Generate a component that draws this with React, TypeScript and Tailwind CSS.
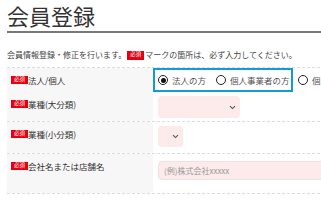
import React from 'react';

const FONT = { fontFamily: '"Noto Sans CJK JP", "Noto Sans", sans-serif' };

function Badge({ className = '' }: { className?: string }) {
  return (
    <span
      className={`inline-flex h-[8px] w-[17px] items-center justify-center bg-[#e60012] text-[5.5px] leading-none text-white ${className}`}
    >
      必須
    </span>
  );
}

function Radio({ checked, label }: { checked?: boolean; label: string }) {
  return (
    <span className="flex items-center gap-[4px]">
      <span className="flex h-[10px] w-[10px] items-center justify-center rounded-full border border-[#222] bg-white">
        {checked && <span className="h-[5px] w-[5px] rounded-full bg-[#111]" />}
      </span>
      <span className="text-[8.5px] leading-none text-[#555]">{label}</span>
    </span>
  );
}

function Chevron() {
  return (
    <svg width="7" height="5" viewBox="0 0 7 5" className="text-[#555]">
      <path d="M1 1.2 L3.5 3.6 L6 1.2" fill="none" stroke="currentColor" strokeWidth="1.1" />
    </svg>
  );
}

function Label({ text }: { text: string }) {
  return (
    <div className="flex w-[146px] shrink-0 items-start bg-[#f7f7f7] pl-[4px] pt-[6px]">
      <span className="flex items-center text-[8.5px] leading-[12px] text-[#333]">
        <Badge />
        {text}
      </span>
    </div>
  );
}

export default function App() {
  return (
    <div className="h-[200px] w-[321px] overflow-hidden bg-white" style={FONT}>
      <div className="w-[420px] pl-[7px]">
        <h1 className="pt-[2px] text-[22px] leading-[26px] text-[#333]">会員登録</h1>
        <div className="mt-[3px] h-[2px] bg-[#777]" />
        <p className="mt-[16px] flex items-center text-[8px] leading-[12px] text-[#444]">
          会員情報登録・修正を行います。
          <Badge className="mx-[1px] h-[9px] w-[15px]" />
          マークの箇所は、必ず入力してください。
        </p>

        <div className="mt-[6px] border-t border-dashed border-[#ddd]">
          <div className="flex h-[24px]">
            <Label text="法人/個人" />
            <div className="flex items-center">
              <div className="flex h-[24px] w-[140px] items-center gap-[10px] border-2 border-[#129bd8] pl-[3px]">
                <Radio checked label="法人の方" />
                <Radio label="個人事業者の方" />
              </div>
              <div className="ml-[5px]">
                <Radio label="個人" />
              </div>
            </div>
          </div>

          <div className="flex h-[30px] border-b border-dashed border-[#ddd]">
            <Label text="業種(大分類)" />
            <div className="pl-[5px] pt-[4px]">
              <div className="flex h-[22px] w-[82px] items-center justify-end rounded-[4px] bg-[#fdeaea] pr-[4px]">
                <Chevron />
              </div>
            </div>
          </div>

          <div className="flex h-[32px] border-b border-dashed border-[#ddd]">
            <Label text="業種(小分類)" />
            <div className="pl-[5px] pt-[4px]">
              <div className="flex h-[21px] w-[25px] items-center justify-end rounded-[4px] bg-[#fdeaea] pr-[4px]">
                <Chevron />
              </div>
            </div>
          </div>

          <div className="flex h-[40px] border-b border-dashed border-[#ddd]">
            <Label text="会社名または店舗名" />
            <div className="flex-1 pl-[5px] pt-[7px]">
              <div className="flex h-[19px] w-[240px] items-center rounded-[4px] border border-[#f6dede] bg-[#fdeaea] pl-[5px] text-[8px] text-[#999]">
                (例)株式会社xxxxx
              </div>
            </div>
          </div>
        </div>
      </div>
    </div>
  );
}
